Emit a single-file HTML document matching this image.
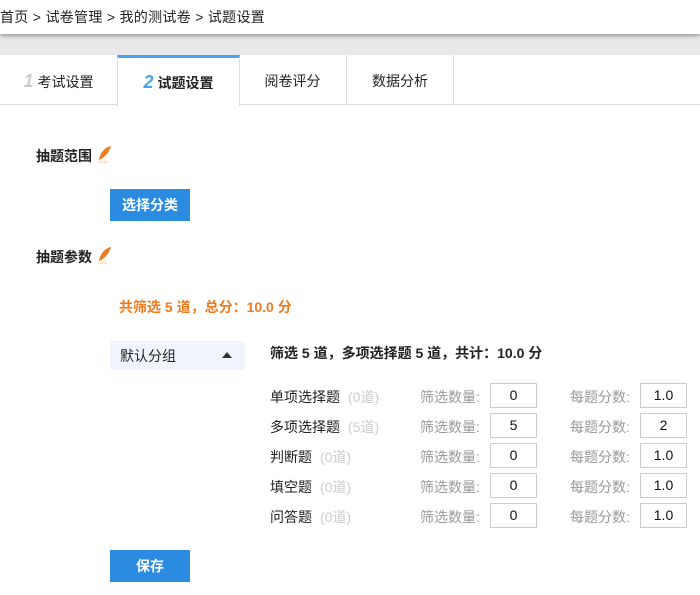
<!DOCTYPE html>
<html><head><meta charset="utf-8"><style>
*{margin:0;padding:0;box-sizing:border-box}
body{width:700px;height:595px;background:#fff;font-family:"Liberation Sans","Noto Sans CJK SC",sans-serif;font-size:14px;color:#222;position:relative;overflow:hidden}
.a{position:absolute;white-space:nowrap}
.hdr{position:absolute;left:0;top:0;width:700px;height:34px;background:#fff;box-shadow:0 2px 4px rgba(0,0,0,.35);z-index:2}
.band{position:absolute;left:0;top:34px;width:700px;height:21px;background:#e9e9e9}
.tabs{position:absolute;left:0;top:55px;width:700px;height:50px;border-bottom:1px solid #ddd}
.tab{position:absolute;top:0;height:50px;border-right:1px solid #ddd;border-bottom:1px solid #ddd;text-align:center;line-height:52px;font-size:14px;background:#fff}
.num{font-style:italic;font-weight:bold;font-size:18px;margin-right:4px}
.btn{position:absolute;left:110px;width:80px;height:32px;background:#2a8be1;color:#fff;font-weight:bold;font-size:14px;text-align:center;line-height:32px}
.lab{font-weight:bold;font-size:14px}
.inp{position:absolute;width:47px;height:25px;border:1px solid #ccc;text-align:center;line-height:23px;font-size:14px;color:#111}
.g{color:#999}.l{color:#ccc;margin-left:8px}
</style></head><body>
<div class="hdr"><div class="a" style="left:0;top:7px;font-size:14px;letter-spacing:0.3px">首页 &gt; 试卷管理 &gt; 我的测试卷 &gt; 试题设置</div></div>
<div class="band"></div>
<div class="tabs">
<div class="tab" style="left:0;width:118px"><span class="num" style="color:#ccc">1</span>考试设置</div>
<div class="tab" style="left:239px;width:108px">阅卷评分</div>
<div class="tab" style="left:346px;width:108px;border-left:1px solid #ddd">数据分析</div>
<div class="tab" style="left:117px;width:123px;border-left:1px solid #ddd;border-top:3px solid #4ba3f0;border-bottom:none;height:51px;line-height:48px;font-weight:bold"><span class="num" style="color:#4ba3f0">2</span>试题设置</div>
</div>
<svg class="a" style="left:97px;top:145px" width="16" height="18" viewBox="0 0 16 18"><path d="M14 1C8 2 3 8 2 15 7 13 12 8 14 1Z" fill="#f07a1e"/><path d="M1 17h10" stroke="#f4a060" stroke-dasharray="1 1"/></svg>
<div class="a lab" style="left:36px;top:146px">抽题范围</div>
<div class="btn" style="top:189px">选择分类</div>
<div class="a lab" style="left:36px;top:247px">抽题参数</div>
<svg class="a" style="left:97px;top:246px" width="16" height="18" viewBox="0 0 16 18"><path d="M14 1C8 2 3 8 2 15 7 13 12 8 14 1Z" fill="#f07a1e"/><path d="M1 17h10" stroke="#f4a060" stroke-dasharray="1 1"/></svg>
<div class="a" style="left:119px;top:297px;color:#f07a1e;font-weight:bold">共筛选 5 道，总分：10.0 分</div>
<div class="a" style="left:110px;top:341px;width:135px;height:29px;background:#f0f5fd;border-radius:3px"></div>
<div class="a" style="left:120px;top:346px;font-size:14px">默认分组</div>
<div class="a" style="left:222px;top:352px;width:0;height:0;border-left:5px solid transparent;border-right:5px solid transparent;border-bottom:6px solid #333"></div>
<div class="a" style="left:270px;top:343px;font-weight:bold">筛选 5 道，多项选择题 5 道，共计：10.0 分</div>

<div class="a" style="left:270px;top:387px">单项选择题<span class="l">(0道)</span></div>
<div class="a" style="left:270px;top:417px">多项选择题<span class="l">(5道)</span></div>
<div class="a" style="left:270px;top:447px">判断题<span class="l">(0道)</span></div>
<div class="a" style="left:270px;top:477px">填空题<span class="l">(0道)</span></div>
<div class="a" style="left:270px;top:507px">问答题<span class="l">(0道)</span></div>

<div class="a g" style="left:420px;top:387px">筛选数量:</div>
<div class="a g" style="left:420px;top:417px">筛选数量:</div>
<div class="a g" style="left:420px;top:447px">筛选数量:</div>
<div class="a g" style="left:420px;top:477px">筛选数量:</div>
<div class="a g" style="left:420px;top:507px">筛选数量:</div>
<div class="inp" style="left:490px;top:383px">0</div>
<div class="inp" style="left:490px;top:413px">5</div>
<div class="inp" style="left:490px;top:443px">0</div>
<div class="inp" style="left:490px;top:473px">0</div>
<div class="inp" style="left:490px;top:503px">0</div>
<div class="a g" style="left:570px;top:387px">每题分数:</div>
<div class="a g" style="left:570px;top:417px">每题分数:</div>
<div class="a g" style="left:570px;top:447px">每题分数:</div>
<div class="a g" style="left:570px;top:477px">每题分数:</div>
<div class="a g" style="left:570px;top:507px">每题分数:</div>
<div class="inp" style="left:640px;top:383px">1.0</div>
<div class="inp" style="left:640px;top:413px">2</div>
<div class="inp" style="left:640px;top:443px">1.0</div>
<div class="inp" style="left:640px;top:473px">1.0</div>
<div class="inp" style="left:640px;top:503px">1.0</div>
<div class="btn" style="top:550px">保存</div>
</body></html>
